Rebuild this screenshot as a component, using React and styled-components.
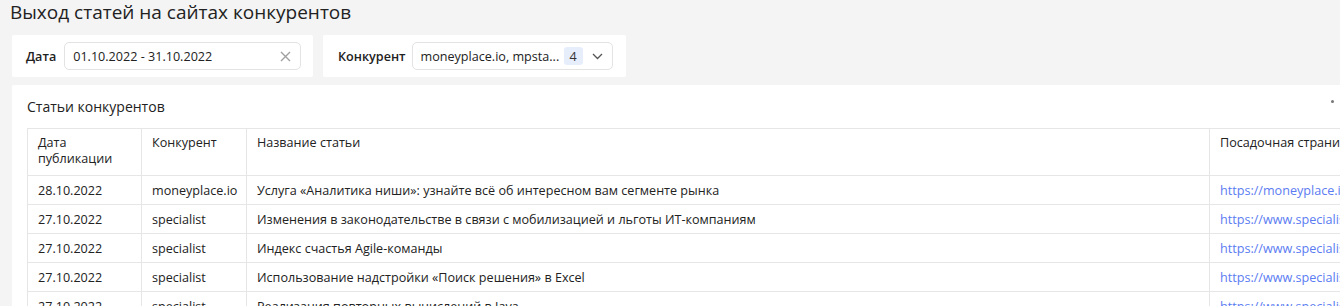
import React from "react";
import styled, { createGlobalStyle } from "styled-components";

const Global = createGlobalStyle`
  html, body { margin: 0; padding: 0; background: #f4f4f4; overflow: hidden; }
  body { font-family: "Open Sans", "Noto Sans", sans-serif; color: #222; }
`;

const Page = styled.div`
  padding: 0 0 0 12px;
  width: 1400px;
`;

const Title = styled.h1`
  margin: 0 0 0 -2px;
  font-size: 19px;
  line-height: 24px;
  font-weight: 500;
  color: #222;
  height: 35px;
`;

const Filters = styled.div`
  display: flex;
  gap: 10px;
  margin-bottom: 8px;
`;

const FilterCard = styled.div`
  background: #fff;
  width: ${(p) => p.$w}px;
  height: 42px;
  box-sizing: border-box;
  display: flex;
  align-items: center;
  padding: 0 0 0 ${(p) => p.$pl}px;
  gap: ${(p) => p.$gap}px;
  border-radius: 2px;
`;

const Label = styled.span`
  font-size: 12.6px;
  font-weight: 600;
  color: #222;
`;

const Field = styled.div`
  width: ${(p) => p.$w}px;
  height: 28px;
  box-sizing: border-box;
  border: 1px solid #e3e3e3;
  border-radius: 5px;
  display: flex;
  align-items: center;
  padding: 0 8px;
  font-size: 12.6px;
  color: #222;
`;

const FieldText = styled.span`
  flex: 1;
  white-space: nowrap;
`;

const Badge = styled.span`
  width: 19px;
  height: 18px;
  border-radius: 3px;
  background: #e7eefb;
  display: inline-flex;
  align-items: center;
  justify-content: center;
  font-size: 12.6px;
  color: #333;
  margin-right: 9px;
`;

const IconBox = styled.span`
  display: inline-flex;
  align-items: center;
  justify-content: center;
  width: ${(p) => p.$w || 14}px;
`;

const Card = styled.div`
  background: #fff;
  width: 1325px;
  padding: 8px 15px 0 15px;
  border-radius: 2px;
`;

const CardHead = styled.div`
  display: flex;
  justify-content: space-between;
  align-items: center;
  height: 26px;
  margin-bottom: 9px;
`;

const CardTitle = styled.span`
  font-size: 14px;
  color: #222;
`;

const Dots = styled.span`
  display: flex;
  gap: 6px;
  margin: -9px 0 0 0;
  & > i {
    width: 3px;
    height: 3px;
    border-radius: 50%;
    background: #777;
  }
`;

const Scroller = styled.div`
  overflow: hidden;
`;

const Table = styled.table`
  border-collapse: collapse;
  table-layout: fixed;
  width: 1482px;
  font-size: 12.6px;
  color: #222;
`;

const Th = styled.th`
  text-align: left;
  font-weight: 400;
  vertical-align: top;
  border: 1px solid #e6e6e6;
  padding: 6px 10px;
  line-height: 16px;
  height: 34px;
`;

const Td = styled.td`
  border: 1px solid #e6e6e6;
  padding: 0 10px;
  height: 28px;
  line-height: 17px;
  white-space: nowrap;
  overflow: hidden;
`;

const Link = styled.a`
  color: #5b7cf2;
  text-decoration: none;
`;

const cols = [114, 105, 963, 300];

const rows = [
  ["28.10.2022", "moneyplace.io", "Услуга «Аналитика ниши»: узнайте всё об интересном вам сегменте рынка", "https://moneyplace.io/blog/analitika-nishi"],
  ["27.10.2022", "specialist", "Изменения в законодательстве в связи с мобилизацией и льготы ИТ-компаниям", "https://www.specialist.ru/news/izmeneniya"],
  ["27.10.2022", "specialist", "Индекс счастья Agile-команды", "https://www.specialist.ru/news/indeks"],
  ["27.10.2022", "specialist", "Использование надстройки «Поиск решения» в Excel", "https://www.specialist.ru/news/excel"],
  ["27.10.2022", "specialist", "Реализация повторных вычислений в Java", "https://www.specialist.ru/news/java"],
];

export default function App() {
  return (
    <>
      <Global />
      <Page>
        <Title>Выход статей на сайтах конкурентов</Title>
        <Filters>
          <FilterCard $w={301} $pl={14} $gap={8}>
            <Label>Дата</Label>
            <Field $w={237}>
              <FieldText>01.10.2022 - 31.10.2022</FieldText>
              <IconBox>
                <svg width="11" height="11" viewBox="0 0 11 11">
                  <path d="M1 1L10 10M10 1L1 10" stroke="#a0a0a0" strokeWidth="1.4" />
                </svg>
              </IconBox>
            </Field>
          </FilterCard>
          <FilterCard $w={303} $pl={15} $gap={6}>
            <Label>Конкурент</Label>
            <Field $w={201}>
              <FieldText>moneyplace.io, mpsta...</FieldText>
              <Badge>4</Badge>
              <IconBox $w={12}>
                <svg width="11" height="7" viewBox="0 0 11 7">
                  <path d="M1 1L5.5 5.5L10 1" stroke="#555" strokeWidth="1.3" fill="none" />
                </svg>
              </IconBox>
            </Field>
          </FilterCard>
        </Filters>
        <Card>
          <CardHead>
            <CardTitle>Статьи конкурентов</CardTitle>
            <Dots>
              <i />
              <i />
              <i />
            </Dots>
          </CardHead>
          <Scroller>
            <Table>
              <colgroup>
                {cols.map((w, i) => (
                  <col key={i} style={{ width: w }} />
                ))}
              </colgroup>
              <thead>
                <tr>
                  <Th>Дата публикации</Th>
                  <Th>Конкурент</Th>
                  <Th>Название статьи</Th>
                  <Th>Посадочная страница</Th>
                </tr>
              </thead>
              <tbody>
                {rows.map((r, i) => (
                  <tr key={i}>
                    <Td>{r[0]}</Td>
                    <Td>{r[1]}</Td>
                    <Td>{r[2]}</Td>
                    <Td>
                      <Link href="#">{r[3]}</Link>
                    </Td>
                  </tr>
                ))}
              </tbody>
            </Table>
          </Scroller>
        </Card>
      </Page>
    </>
  );
}
